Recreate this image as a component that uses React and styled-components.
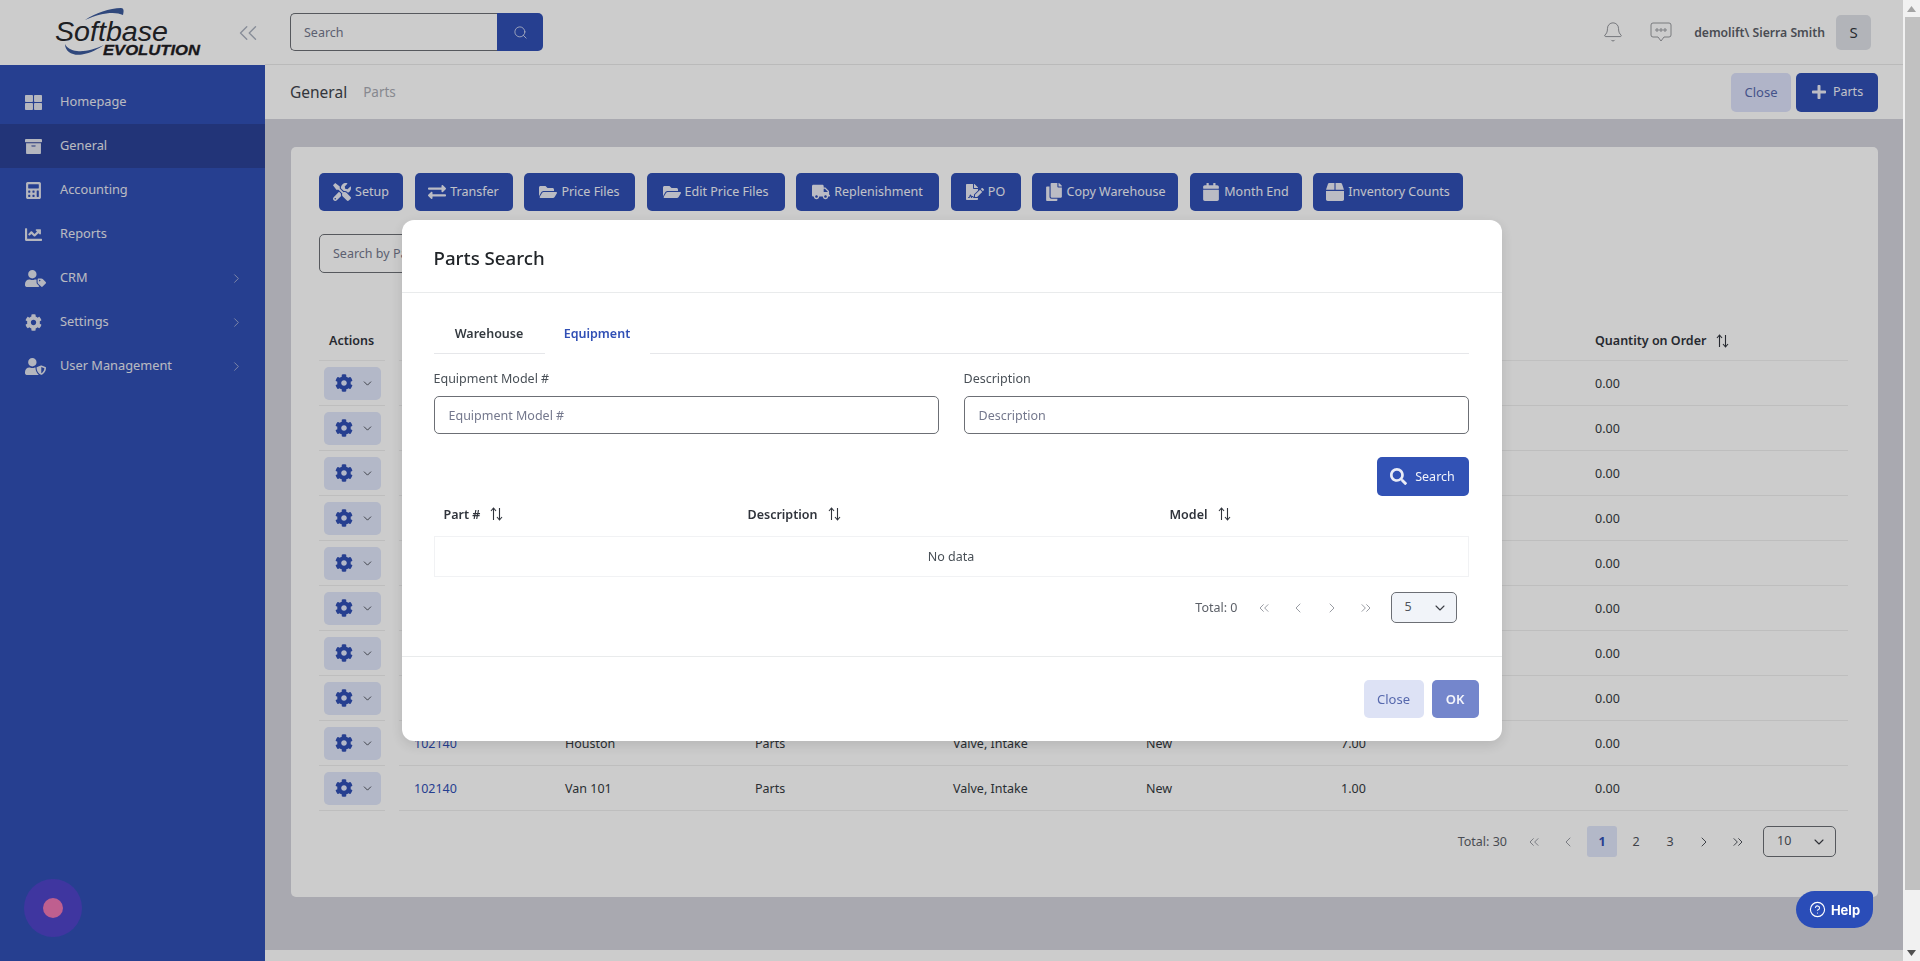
import React from "react";
import styled, { createGlobalStyle } from "styled-components";
import {
  FaThLarge, FaArchive, FaCalculator, FaChartLine, FaUserTag, FaCog, FaUserShield,
  FaTools, FaExchangeAlt, FaFolderOpen, FaTruck, FaFileSignature, FaCopy,
  FaCalendar, FaBox, FaPlus, FaSearch,
} from "react-icons/fa";
import { Search, ChevronRight, ChevronLeft, ChevronDown, ChevronsLeft, ChevronsRight, Bell, CircleHelp } from "lucide-react";

const FONT = `"Noto Sans", "Open Sans", sans-serif`;

const Global = createGlobalStyle`
  html, body { margin: 0; padding: 0; height: 961px; overflow: hidden; background: #fff; }
  body { font-family: ${FONT}; font-size: 13px; color: #212529; }
  * { box-sizing: border-box; }
  input { font-family: ${FONT}; }
  input::placeholder { color: #74788d; opacity: 1; }
`;

const Shell = styled.div`display: flex; width: 1920px; height: 961px; overflow: hidden;`;

const Sidebar = styled.aside`width: 265px; flex: none; background: #304fb5; display: flex; flex-direction: column;`;
const SideHead = styled.div`
  height: 65px; background: #fff; display: flex; align-items: center; justify-content: space-between;
  padding: 0 2px 0 54px; color: #aab1bf;
`;
const Nav = styled.nav`padding-top: 15px; display: flex; flex-direction: column;`;
const NavItem = styled.div`
  height: 44px; display: flex; align-items: center; padding: 0 21px 0 25px; color: #e8e9f2;
  background: ${(p) => (p.$active ? "#2b4296" : "transparent")};
  font-size: 12.8px;
`;
const NavIcon = styled.span`width: 35px; flex: none; display: flex; color: #e2e4ee; font-size: ${(p) => p.$size || 17}px;`;
const NavLabel = styled.span`flex: 1; padding-bottom: 2px;`;
const NavArrow = styled.span`display: flex; color: #a4aed4;`;

const Main = styled.div`flex: 1; min-width: 0; display: flex; flex-direction: column; background: #d4d4dd;`;
const TopBar = styled.header`
  height: 65px; flex: none; background: #fff; border-bottom: 1px solid #e9e9e9;
  display: flex; align-items: center; padding: 0 32px 0 25px;
`;
const SearchGroup = styled.div`display: flex; width: 253px; height: 38px;`;
const SearchField = styled.input`
  width: 207px; height: 38px; border: 1px solid #6c6f75; border-right: none; border-radius: 5px 0 0 5px;
  padding: 0 13px; font-size: 12.5px; background: transparent; outline: none;
`;
const SearchBtn = styled.button`
  width: 46px; border: none; background: #304fb5; border-radius: 0 5px 5px 0; color: #dfe4f5;
  display: flex; align-items: center; justify-content: center; padding: 0;
`;
const TopRight = styled.div`margin-left: auto; display: flex; align-items: center; color: #7d8087;`;
const TopIcon = styled.span`display: flex; margin-right: ${(p) => p.$mr}px;`;
const UserName = styled.span`font-size: 12.2px; font-weight: 600; color: #5c6068; margin-right: 11px; white-space: nowrap;`;
const Avatar = styled.div`
  width: 35px; height: 35px; border-radius: 5px; background: #dfe2e8; color: #33363c; font-size: 15px;
  display: flex; align-items: center; justify-content: center;
`;

const CrumbBar = styled.div`
  height: 54px; flex: none; background: #fff; display: flex; align-items: center; padding: 0 25px;
`;
const CrumbMain = styled.span`font-size: 15.5px; color: #40444c; margin-right: 16px;`;
const CrumbSub = styled.span`font-size: 13.5px; color: #a9abb3;`;
const CrumbActions = styled.div`margin-left: auto; display: flex; gap: 5px;`;
const SoftBtn = styled.button`
  width: 60px; height: 39px; padding: 0; border: none; border-radius: 5px; background: #dde2fa; color: #5668ad;
  font-family: ${FONT}; font-size: 13px;
`;
const PrimaryBtn = styled.button`
  width: ${(p) => p.$w}px; height: ${(p) => p.$h || 38}px; border: none; border-radius: 5px;
  background: ${(p) => p.$bg || "#304fb5"}; color: #f2f3fa;
  font-family: ${FONT}; font-size: 12.5px; display: flex; align-items: center; justify-content: center;
  gap: ${(p) => p.$gap || 4}px; padding: 0 0 1px; white-space: nowrap;
  svg { color: #eaecf6; font-size: ${(p) => p.$icon || 18}px; flex: none; }
`;

const Content = styled.main`flex: 1; padding: 28px 25px 0 26px; min-height: 0;`;
const Card = styled.section`
  height: 750px; background: #fff; border-radius: 5px; padding: 26px 30px 0 28px;
`;
const Toolbar = styled.div`display: flex; gap: 11.5px;`;
const FilterInput = styled.input`
  display: block; margin-top: 23px; width: 420px; height: 39px; border: 1px solid #6c6f75; border-radius: 5px;
  padding: 0 13px; font-size: 12.5px; background: transparent; outline: none;
`;
const TableHead = styled.div`display: flex; height: 40px; margin-top: 48px; align-items: center;`;
const ActionsHead = styled.div`width: 66px; flex: none; padding-left: 10px; font-weight: 600; font-size: 12.5px; color: #30343c; height: 100%; display: flex; align-items: center; border-bottom: 1px solid #f0f0f0;`;
const Row = styled.div`display: flex; height: 45px;`;
const ActionsCell = styled.div`width: 66px; flex: none; border-bottom: 1px solid #eee; display: flex; align-items: center; padding-left: 5px;`;
const ActionBtn = styled.div`
  width: 57px; height: 33px; border-radius: 5px; background: #e0e6fa; display: flex; align-items: center;
  padding-left: 11px; gap: 8px; color: #304fb5; font-size: 18px;
  svg + svg { color: #32353c; }
`;
const DataCols = styled.div`
  margin-left: 14px; flex: 1; display: grid; grid-template-columns: 151px 190px 198px 193px 195px 254px 1fr;
  align-items: center; border-bottom: 1px solid #eee;
`;
const HeadCols = styled(DataCols)`height: 100%; border-bottom: 1px solid #f0f0f0;`;
const Cell = styled.div`padding-left: 15px; font-size: 12.5px; color: ${(p) => (p.$link ? "#304fb5" : "#343a40")}; white-space: nowrap;`;
const HeadLabel = styled.div`padding-left: ${(p) => p.$pl ?? 15}px; font-size: 12.5px; font-weight: 600; color: #30343c; display: flex; align-items: center; gap: 10px; white-space: nowrap;`;

const Pager = styled.div`display: flex; align-items: center; justify-content: flex-end; height: 31px; margin-top: ${(p) => p.$mt}px; padding-right: ${(p) => p.$pr}px;`;
const Total = styled.span`font-size: 12.5px; color: #5c6068; margin-right: ${(p) => p.$mr}px;`;
const PageBtn = styled.span`
  width: 30px; height: 31px; margin: 0 2px; display: flex; align-items: center; justify-content: center;
  font-size: 12.5px; border-radius: 3px;
  color: ${(p) => (p.$active ? "#304fb5" : p.$muted ? "#9a9da4" : "#50545c")};
  background: ${(p) => (p.$active ? "#e0e6fa" : "transparent")};
  font-weight: ${(p) => (p.$active ? 700 : 400)};
`;
const PageSelect = styled.div`
  width: ${(p) => p.$w}px; height: 31px; border: 1px solid #6c6f75; border-radius: 5px; margin-left: 8px;
  background: ${(p) => p.$bg || "transparent"};
  display: flex; align-items: center; justify-content: space-between; padding: 0 8px 3px 13px; font-size: 12.5px; color: #50545c;
  svg { margin-top: 3px; color: #3a3d44; }
`;

const Backdrop = styled.div`
  position: fixed; top: 0; left: 0; width: 1903px; height: 961px; background: rgba(0, 0, 0, 0.2);
  display: flex; justify-content: center; align-items: flex-start; padding-top: 220px;
`;
const Modal = styled.div`
  width: 1100px; height: 521px; background: #fff; border-radius: 12px; display: flex; flex-direction: column;
  box-shadow: 0 4px 14px rgba(0, 0, 0, 0.12);
`;
const ModalHead = styled.div`height: 73px; flex: none; border-bottom: 1px solid #e9ebec; display: flex; align-items: center; padding: 2px 0 0 32px;`;
const ModalTitle = styled.h2`margin: 0; font-size: 18.7px; font-weight: 500; color: #212529;`;
const ModalBody = styled.div`flex: 1; padding: 0 33px 0 32px;`;
const Tabs = styled.div`display: flex; height: 61px;`;
const Tab = styled.div`
  display: flex; align-items: center; justify-content: center; width: ${(p) => p.$w}px; padding-top: 20px;
  font-size: 12.5px; font-weight: 600; color: ${(p) => (p.$active ? "#304fb5" : "#343a40")};
  border-bottom: ${(p) => (p.$active ? "1px solid transparent" : "1px solid #e6e7ea")};
`;
const TabFill = styled.div`flex: 1; border-bottom: 1px solid #e6e7ea;`;
const FormGrid = styled.div`display: grid; grid-template-columns: 505px 505px; column-gap: 25px; margin-top: 16px;`;
const FieldLabel = styled.label`display: block; font-size: 12.5px; line-height: 18px; color: #495057; margin-bottom: 8px;`;
const FieldInput = styled.input`
  width: 100%; height: 38px; border: 1px solid #6c6f75; border-radius: 5px; padding: 0 14px; font-size: 12.5px; outline: none; background: #fff;
`;
const SearchRow = styled.div`display: flex; justify-content: flex-end; margin-top: 23px;`;
const ModalHeadRow = styled.div`display: grid; grid-template-columns: 304px 422px 1fr; height: 40px; align-items: center; padding-bottom: 4px;`;
const NoData = styled.div`height: 41px; border: 1px solid #f1f2f4; display: flex; align-items: center; justify-content: center; font-size: 12.5px; color: #495057;`;
const ModalFoot = styled.div`height: 85px; flex: none; border-top: 1px solid #e9ebec; display: flex; justify-content: flex-end; align-items: flex-start; gap: 8px; padding: 23px 23px 0 0;`;
const FootClose = styled.button`width: 60px; height: 38px; border: none; border-radius: 5px; background: #dde2f5; color: #5668ad; font-family: ${FONT}; font-size: 13px;`;
const FootOk = styled.button`width: 47px; height: 38px; border: none; border-radius: 5px; background: #7486cc; color: #f4f5fb; font-family: ${FONT}; font-size: 13px; font-weight: 600;`;

const Footer = styled.div`height: 11px; flex: none; background: #fff;`;

const ScrollTrack = styled.div`width: 17px; flex: none; background: #f1f1f1; display: flex; flex-direction: column; align-items: center; position: relative; z-index: 3;`;
const ScrollArrow = styled.div`height: 17px; width: 100%; flex: none; display: flex; align-items: center; justify-content: center;`;
const ScrollThumb = styled.div`width: 15px; margin-left: 2px; height: 873px; background: #c1c1c1;`;
const ScrollRest = styled.div`flex: 1;`;

const Widget = styled.div`
  position: fixed; left: 24px; top: 879px; width: 58px; height: 58px; border-radius: 50%; background: #3f36a0;
  display: flex; align-items: center; justify-content: center;
`;
const WidgetDot = styled.div`width: 20px; height: 20px; border-radius: 50%; background: #bf5f8f;`;
const HelpBtn = styled.div`
  position: fixed; left: 1796px; top: 891px; width: 77px; height: 37px; background: #2a4db8; color: #fff;
  border-radius: 19px 5px 19px 19px; display: flex; align-items: center; justify-content: center; gap: 5px;
  font-family: Inter, sans-serif; font-size: 13px; font-weight: 700;
`;

const SortIcon = () => (
  <svg width="13" height="14" viewBox="0 0 13 14" fill="none" stroke="#30343c" strokeWidth="1.1">
    <path d="M3.5 13V1.5M1 4l2.5-3L6 4" />
    <path d="M9.5 1v11.5M7 10l2.5 3 2.5-3" />
  </svg>
);

const ChatIcon = () => (
  <svg width="22" height="20" viewBox="0 0 22 20" fill="none" stroke="#7d8087" strokeWidth="0.8">
    <path d="M3 1h16a2 2 0 0 1 2 2v10a2 2 0 0 1-2 2h-5l-3 4-3-4H3a2 2 0 0 1-2-2V3a2 2 0 0 1 2-2z" />
    <circle cx="7" cy="8" r="1.2" /><circle cx="11" cy="8" r="1.2" /><circle cx="15" cy="8" r="1.2" />
  </svg>
);

const Logo = () => (
  <svg width="147" height="50" viewBox="0 0 147 50">
    <path d="M31 12C41 5 56 0 67 0c3 0 3 3 2 7C61 3 46 5 31 12z" fill="#3c5a9c" />
    <path d="M11 36c0 8 8 12 17 10.5 9-1.5 16-5.500 22-9.500-9 4-19 7-27 6-6-.5-10-3-12-7z" fill="#3c5a9c" />
    <text x="1" y="33" fontFamily="Liberation Sans, sans-serif" fontStyle="italic" fontSize="27" fill="#26272b" textLength="113" lengthAdjust="spacingAndGlyphs">Softbase</text>
    <text x="49" y="47" fontFamily="Liberation Sans, sans-serif" fontStyle="italic" fontWeight="700" fontSize="15" stroke="#1f2024" strokeWidth="0.3" fill="#1f2024" textLength="97" lengthAdjust="spacingAndGlyphs">EVOLUTION</text>
  </svg>
);

const navItems = [
  { label: "Homepage", icon: FaThLarge },
  { label: "General", icon: FaArchive, active: true },
  { label: "Accounting", icon: FaCalculator },
  { label: "Reports", icon: FaChartLine },
  { label: "CRM", icon: FaUserTag, arrow: true, size: 21 },
  { label: "Settings", icon: FaCog, arrow: true },
  { label: "User Management", icon: FaUserShield, arrow: true, size: 21 },
];

const tools = [
  { label: "Setup", icon: FaTools, w: 84 },
  { label: "Transfer", icon: FaExchangeAlt, w: 98 },
  { label: "Price Files", icon: FaFolderOpen, w: 111 },
  { label: "Edit Price Files", icon: FaFolderOpen, w: 138 },
  { label: "Replenishment", icon: FaTruck, w: 143 },
  { label: "PO", icon: FaFileSignature, w: 70 },
  { label: "Copy Warehouse", icon: FaCopy, w: 146 },
  { label: "Month End", icon: FaCalendar, w: 112 },
  { label: "Inventory Counts", icon: FaBox, w: 150 },
];

const rows = [
  ...Array.from({ length: 8 }, () => null),
  ["102140", "Houston", "Parts", "Valve, Intake", "New", "7.00"],
  ["102140", "Van 101", "Parts", "Valve, Intake", "New", "1.00"],
];

const headCols = ["", "", "", "", "", "", "Quantity on Order"];

export default function App() {
  return (
    <>
      <Global />
      <Shell>
        <Sidebar>
          <SideHead>
            <Logo />
            <ChevronsLeft size={30} strokeWidth={1.1} />
          </SideHead>
          <Nav>
            {navItems.map((n) => (
              <NavItem key={n.label} $active={n.active}>
                <NavIcon $size={n.size}><n.icon /></NavIcon>
                <NavLabel>{n.label}</NavLabel>
                {n.arrow && <NavArrow><ChevronRight size={15} strokeWidth={1.5} /></NavArrow>}
              </NavItem>
            ))}
          </Nav>
        </Sidebar>

        <Main>
          <TopBar>
            <SearchGroup>
              <SearchField placeholder="Search" />
              <SearchBtn><Search size={15} strokeWidth={1.3} /></SearchBtn>
            </SearchGroup>
            <TopRight>
              <TopIcon $mr={26}><Bell size={22} strokeWidth={0.9} /></TopIcon>
              <TopIcon $mr={22}><ChatIcon /></TopIcon>
              <UserName>demolift\ Sierra Smith</UserName>
              <Avatar>S</Avatar>
            </TopRight>
          </TopBar>
          <CrumbBar>
            <CrumbMain>General</CrumbMain>
            <CrumbSub>Parts</CrumbSub>
            <CrumbActions>
              <SoftBtn>Close</SoftBtn>
              <PrimaryBtn $w={82} $h={39} $gap={6} $icon={16}><FaPlus />Parts</PrimaryBtn>
            </CrumbActions>
          </CrumbBar>
          <Content>
            <Card>
              <Toolbar>
                {tools.map((t) => (
                  <PrimaryBtn key={t.label} $w={t.w}>
                    <t.icon />{t.label}
                  </PrimaryBtn>
                ))}
              </Toolbar>
              <FilterInput placeholder="Search by Part #" />
              <TableHead>
                <ActionsHead>Actions</ActionsHead>
                <HeadCols>
                  {headCols.map((h, i) => (
                    <HeadLabel key={i}>{h}{h && <SortIcon />}</HeadLabel>
                  ))}
                </HeadCols>
              </TableHead>
              {rows.map((r, i) => (
                <Row key={i}>
                  <ActionsCell>
                    <ActionBtn><FaCog /><ChevronDown size={13} strokeWidth={1.5} /></ActionBtn>
                  </ActionsCell>
                  <DataCols>
                    <Cell $link>{r && r[0]}</Cell>
                    <Cell>{r && r[1]}</Cell>
                    <Cell>{r && r[2]}</Cell>
                    <Cell>{r && r[3]}</Cell>
                    <Cell>{r && r[4]}</Cell>
                    <Cell>{r && r[5]}</Cell>
                    <Cell>0.00</Cell>
                  </DataCols>
                </Row>
              ))}
              <Pager $mt={15} $pr={12}>
                <Total $mr={10}>Total: 30</Total>
                <PageBtn $muted><ChevronsLeft size={16} strokeWidth={1.5} /></PageBtn>
                <PageBtn $muted><ChevronLeft size={16} strokeWidth={1.5} /></PageBtn>
                <PageBtn $active>1</PageBtn>
                <PageBtn>2</PageBtn>
                <PageBtn>3</PageBtn>
                <PageBtn><ChevronRight size={16} strokeWidth={1.5} /></PageBtn>
                <PageBtn><ChevronsRight size={16} strokeWidth={1.5} /></PageBtn>
                <PageSelect $w={73}>10<ChevronDown size={16} strokeWidth={1.6} /></PageSelect>
              </Pager>
            </Card>
          </Content>
          <Footer />
        </Main>

        <ScrollTrack>
          <ScrollArrow>
            <svg width="9" height="6" viewBox="0 0 9 6"><path d="M4.5 0 9 6H0z" fill="#a3a3a3" /></svg>
          </ScrollArrow>
          <ScrollThumb />
          <ScrollRest />
          <ScrollArrow>
            <svg width="9" height="6" viewBox="0 0 9 6"><path d="M0 0h9L4.5 6z" fill="#505050" /></svg>
          </ScrollArrow>
        </ScrollTrack>
      </Shell>

      <Backdrop>
        <Modal>
          <ModalHead><ModalTitle>Parts Search</ModalTitle></ModalHead>
          <ModalBody>
            <Tabs>
              <Tab $w={111}>Warehouse</Tab>
              <Tab $w={105} $active>Equipment</Tab>
              <TabFill />
            </Tabs>
            <FormGrid>
              <div>
                <FieldLabel>Equipment Model #</FieldLabel>
                <FieldInput placeholder="Equipment Model #" />
              </div>
              <div>
                <FieldLabel>Description</FieldLabel>
                <FieldInput placeholder="Description" />
              </div>
            </FormGrid>
            <SearchRow>
              <PrimaryBtn $w={92} $h={39} $gap={8} $icon={17} $bg="#3252b5"><FaSearch />Search</PrimaryBtn>
            </SearchRow>
            <ModalHeadRow>
              <HeadLabel $pl={10}>Part #<SortIcon /></HeadLabel>
              <HeadLabel $pl={10}>Description<SortIcon /></HeadLabel>
              <HeadLabel $pl={10}>Model<SortIcon /></HeadLabel>
            </ModalHeadRow>
            <NoData>No data</NoData>
            <Pager $mt={15} $pr={12}>
              <Total $mr={9}>Total: 0</Total>
              <PageBtn $muted><ChevronsLeft size={16} strokeWidth={1.5} /></PageBtn>
              <PageBtn $muted><ChevronLeft size={16} strokeWidth={1.5} /></PageBtn>
              <PageBtn $muted><ChevronRight size={16} strokeWidth={1.5} /></PageBtn>
              <PageBtn $muted><ChevronsRight size={16} strokeWidth={1.5} /></PageBtn>
              <PageSelect $w={66} $bg="#f1f4f9">5<ChevronDown size={16} strokeWidth={1.6} /></PageSelect>
            </Pager>
          </ModalBody>
          <ModalFoot>
            <FootClose>Close</FootClose>
            <FootOk>OK</FootOk>
          </ModalFoot>
        </Modal>
      </Backdrop>

      <Widget><WidgetDot /></Widget>
      <HelpBtn><CircleHelp size={17} strokeWidth={1.6} />Help</HelpBtn>
    </>
  );
}
